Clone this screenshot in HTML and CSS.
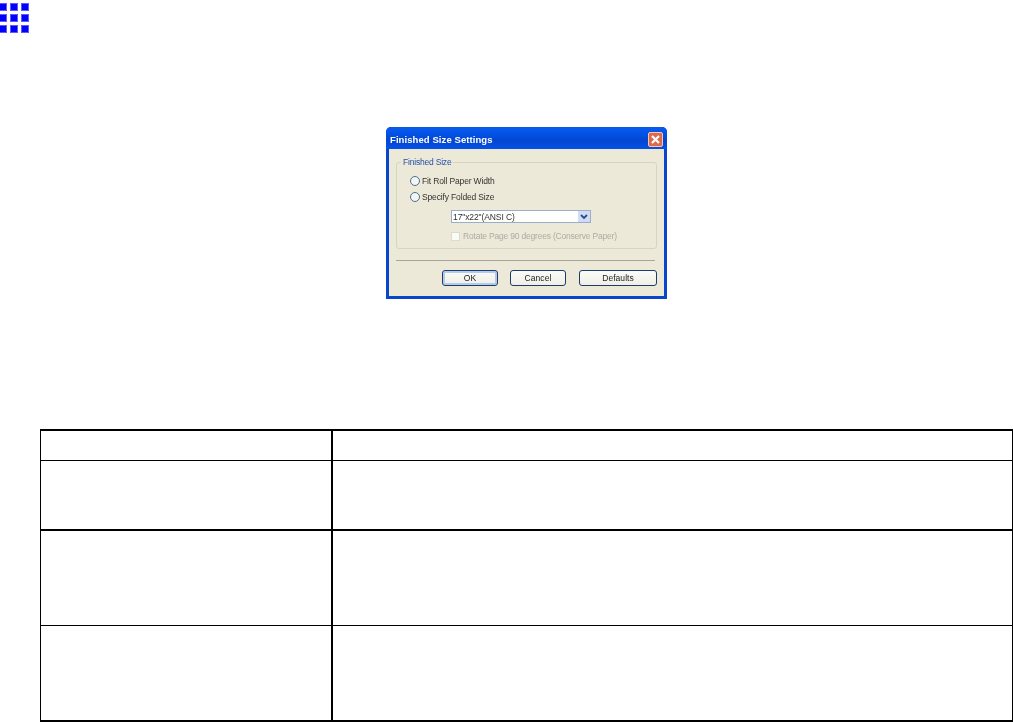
FILE: index.html
```html
<!DOCTYPE html>
<html lang="en">
<head>
<meta charset="utf-8">
<title>Finished Size Settings</title>
<link rel="stylesheet" href="styles.css">
</head>
<body>
<header class="marker">
  <svg class="marker-icon" width="30" height="30" viewBox="0 0 30 30" aria-hidden="true">
    <g fill="#0000ff" stroke="#5a5aff" stroke-width="1">
      <rect x="-0.5" y="0.5" width="7" height="7"/><rect x="10.5" y="0.5" width="7" height="7"/><rect x="21.5" y="0.5" width="7" height="7"/>
      <rect x="-0.5" y="11.5" width="7" height="7"/><rect x="10.5" y="11.5" width="7" height="7"/><rect x="21.5" y="11.5" width="7" height="7"/>
      <rect x="-0.5" y="22.5" width="7" height="7"/><rect x="10.5" y="22.5" width="7" height="7"/><rect x="21.5" y="22.5" width="7" height="7"/>
    </g>
  </svg>
</header>
<main class="content">
  <figure class="figure">
    <div class="dialog">
      <div class="titlebar">
        <span class="title">Finished Size Settings</span>
        <span class="close">
          <svg width="13" height="13" viewBox="0 0 13 13" aria-hidden="true"><path d="M3 3l7 7M10 3l-7 7" stroke="#fff" stroke-width="2.2" fill="none"/></svg>
        </span>
      </div>
      <div class="dialog-body">
        <fieldset class="group">
          <legend class="legend">Finished Size</legend>
          <div class="option"><span class="radio"></span><span>Fit Roll Paper Width</span></div>
          <div class="option"><span class="radio"></span><span>Specify Folded Size</span></div>
          <div class="select">
            <span class="select-value">17"x22"(ANSI C)</span>
            <span class="select-arrow">
              <svg width="8" height="6" viewBox="0 0 8 6" aria-hidden="true"><path d="M1 1l3 3 3-3" stroke="#2e4a86" stroke-width="1.8" fill="none"/></svg>
            </span>
          </div>
          <div class="check-row"><span class="check"></span><span>Rotate Page 90 degrees (Conserve Paper)</span></div>
        </fieldset>
        <div class="separator"></div>
        <div class="buttons">
          <span class="btn btn-ok">OK</span>
          <span class="btn btn-cancel">Cancel</span>
          <span class="btn btn-defaults">Defaults</span>
        </div>
      </div>
    </div>
  </figure>
  <table class="grid">
    <tbody>
      <tr class="row-head"><td class="col-a"></td><td class="col-b"></td></tr>
      <tr class="row-one"><td class="col-a"></td><td class="col-b"></td></tr>
      <tr class="row-two"><td class="col-a"></td><td class="col-b"></td></tr>
      <tr class="row-three"><td class="col-a"></td><td class="col-b"></td></tr>
    </tbody>
  </table>
</main>
</body>
</html>
```
FILE: styles.css
```css
html, body {
  margin: 0;
  padding: 0;
  background: #fff;
}
body {
  width: 1013px;
  height: 722px;
  overflow: hidden;
  font-family: "Liberation Sans", Arial, sans-serif;
}
.marker {
  height: 33px;
  padding-top: 3px;
  box-sizing: border-box;
}
.marker-icon {
  display: block;
}
.content {
  padding-left: 40px;
}
.figure {
  margin: 94px 0 130px;
  display: flex;
  justify-content: center;
}
.dialog {
  width: 281px;
  height: 172px;
  box-sizing: border-box;
  display: flex;
  flex-direction: column;
  background: #0a46cc;
  border-radius: 5px 5px 0 0;
  padding: 0 3px 3px;
  filter: blur(0.45px);
  color: #333;
  font-size: 8.5px;
}
.titlebar {
  height: 22px;
  box-sizing: border-box;
  margin: 0 -3px;
  padding: 2px 4px 0 4px;
  display: flex;
  align-items: center;
  justify-content: space-between;
  background: linear-gradient(#0a5be0 0%, #0558ee 15%, #0346d2 60%, #0551e6 100%);
  border-radius: 5px 5px 0 0;
}
.title {
  color: #fff;
  font-size: 9.5px;
  font-weight: 700;
  letter-spacing: 0.08px;
}
.close {
  width: 15px;
  height: 15px;
  border-radius: 2px;
  background: #de6a4c;
  border: 1px solid #f0c8b8;
  box-sizing: border-box;
  display: flex;
  align-items: center;
  justify-content: center;
}
.close svg {
  flex: none;
}
.dialog-body {
  flex: 1;
  background: #ece9d8;
  padding: 9px 7px 0;
}
.group {
  margin: 0;
  padding: 6px 0 0 13px;
  height: 91px;
  box-sizing: border-box;
  border: 1px solid #d8d4c2;
  border-radius: 3px;
  min-width: 0;
}
.legend {
  margin-left: -9px;
  padding: 0 2px;
  color: #2450a8;
  font-size: 8.5px;
  letter-spacing: -0.2px;
  line-height: 9px;
}
.option {
  height: 16px;
  display: flex;
  align-items: center;
  gap: 2px;
  letter-spacing: -0.15px;
}
.radio {
  width: 10px;
  height: 10px;
  box-sizing: border-box;
  border-radius: 50%;
  border: 1px solid #4a7098;
  background: #f4f4f0;
}
.select {
  margin: 5px 0 0 41px;
  width: 140px;
  height: 13px;
  box-sizing: border-box;
  border: 1px solid #9aaec8;
  background: #fff;
  display: flex;
  align-items: center;
  justify-content: space-between;
}
.select-value {
  padding-left: 1px;
  letter-spacing: -0.1px;
}
.select-arrow {
  width: 12px;
  height: 11px;
  background: #d0dcf6;
  display: flex;
  align-items: center;
  justify-content: center;
}
.check-row {
  margin: 8px 0 0 41px;
  display: flex;
  align-items: center;
  gap: 3px;
  color: #acaca0;
  letter-spacing: -0.2px;
  white-space: nowrap;
}
.check {
  flex: none;
  width: 9px;
  height: 9px;
  box-sizing: border-box;
  background: #fafaf6;
  border: 1px solid #dcdccc;
}
.separator {
  margin: 11px 2px 0 0;
  height: 1px;
  background: #a8a698;
}
.buttons {
  margin-top: 9px;
  display: flex;
  justify-content: flex-end;
}
.btn {
  height: 16px;
  box-sizing: border-box;
  display: flex;
  align-items: center;
  justify-content: center;
  border: 1px solid #1c3c6c;
  border-radius: 3px;
  background: linear-gradient(#fbfbf8, #f0efe6);
  letter-spacing: 0.05px;
  color: #222;
}
.btn-ok {
  width: 56px;
  margin-right: 12px;
  box-shadow: inset 0 0 0 2px #b4cbec;
}
.btn-cancel {
  width: 56px;
  margin-right: 13px;
}
.btn-defaults {
  width: 78px;
}
.grid {
  width: 973px;
  table-layout: fixed;
  border-collapse: separate;
  border-spacing: 0;
  border-top: 2px solid #000;
  border-left: 1px solid #000;
  border-right: 1px solid #000;
  border-bottom: 2px solid #000;
  box-sizing: border-box;
}
.grid td {
  padding: 0;
  box-sizing: border-box;
}
.col-a {
  width: 292px;
  border-right: 2px solid #000;
}
.row-head td {
  height: 30px;
  border-bottom: 1px solid #000;
}
.row-one td {
  height: 70px;
  border-bottom: 2px solid #000;
}
.row-two td {
  height: 95px;
  border-bottom: 1px solid #000;
}
.row-three td {
  height: 94px;
}
```
